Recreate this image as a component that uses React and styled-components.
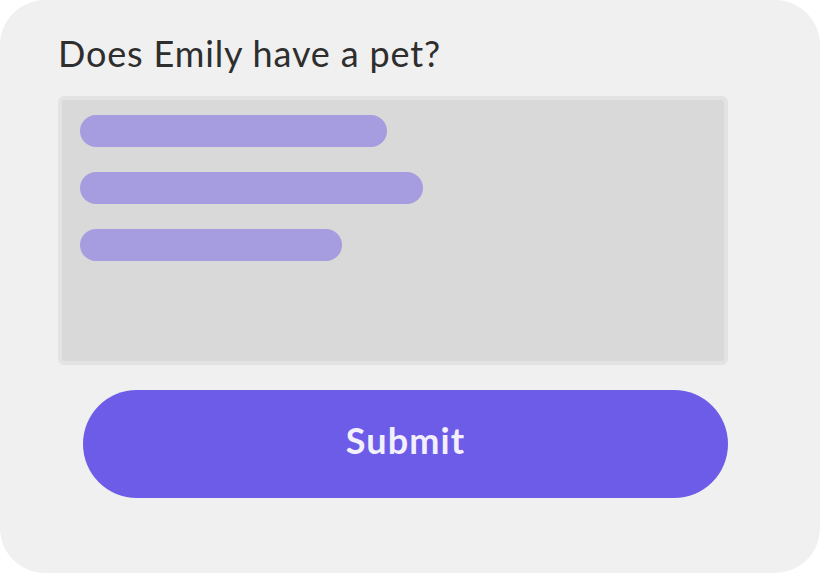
import React from "react";
import styled, { createGlobalStyle } from "styled-components";

const Global = createGlobalStyle`
  html, body {
    margin: 0;
    padding: 0;
    background: #ffffff;
  }
  body {
    font-family: "Lato", "Noto Sans", sans-serif;
  }
`;

const Card = styled.div`
  box-sizing: border-box;
  width: 820px;
  height: 573px;
  background: #f0f0f0;
  border-radius: 45px;
  padding: 30px 0 0 58px;
  display: flex;
  flex-direction: column;
`;

const Question = styled.h1`
  margin: 0;
  font-size: 36px;
  font-weight: 400;
  color: #2e2e2e;
  line-height: 46px;
  letter-spacing: 0.85px;
`;

const AnswerBox = styled.div`
  box-sizing: border-box;
  margin-top: 20px;
  width: 670px;
  height: 269px;
  background: #d9d9d9;
  border: 4px solid #e3e3e3;
  border-radius: 6px;
  padding: 15px 18px;
  display: flex;
  flex-direction: column;
  gap: 25px;
`;

const Line = styled.div`
  height: 32px;
  width: ${(p) => p.$w}px;
  border-radius: 16px;
  background: #a59ddf;
`;

const SubmitButton = styled.button`
  margin: 25px 0 0 25px;
  padding: 0 0 8px;
  width: 645px;
  height: 108px;
  border: none;
  border-radius: 54px;
  background: #6c5ce7;
  color: #f2f0fc;
  font-family: "Lato", "Noto Sans", sans-serif;
  font-weight: 700;
  font-size: 36px;
  letter-spacing: 1.1px;
  cursor: pointer;
`;

export default function App() {
  return (
    <>
      <Global />
      <Card>
        <Question>Does Emily have a pet?</Question>
        <AnswerBox>
          <Line $w={307} />
          <Line $w={343} />
          <Line $w={262} />
        </AnswerBox>
        <SubmitButton>Submit</SubmitButton>
      </Card>
    </>
  );
}
